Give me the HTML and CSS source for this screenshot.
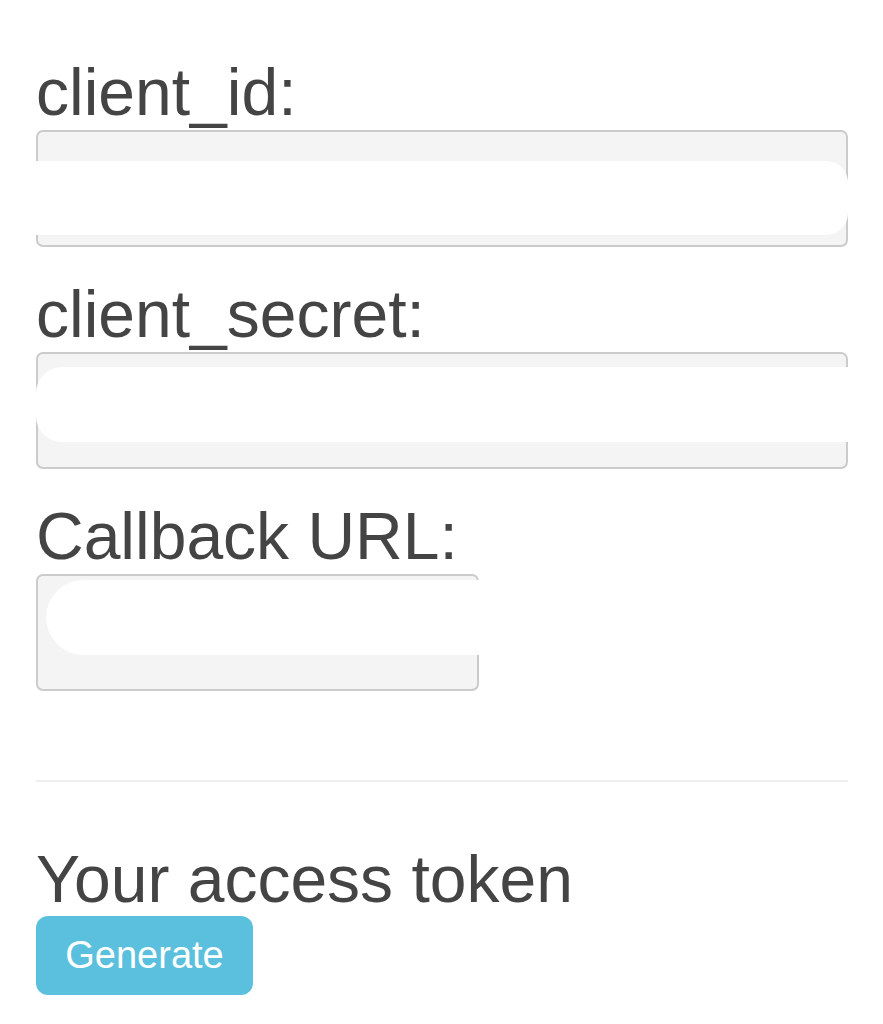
FILE: index.html
```html
<!DOCTYPE html>
<html lang="en">
<head>
<meta charset="utf-8">
<title>Access token</title>
<link rel="stylesheet" href="styles.css">
</head>
<body>
<div class="page">
  <form class="form">
    <label class="label">client_id:</label>
    <div class="field field-id"><div class="fill"></div></div>
    <label class="label">client_secret:</label>
    <div class="field field-secret"><div class="fill"></div></div>
    <label class="label">Callback URL:</label>
    <div class="field field-url"><div class="fill"></div></div>
  </form>
  <hr class="rule">
  <h2 class="heading">Your access token</h2>
  <button class="btn" type="button">Generate</button>
</div>
</body>
</html>
```
FILE: styles.css
```css
html, body {
  margin: 0;
  padding: 0;
  background: #ffffff;
}
.page {
  padding: 55px 35px 0 36px;
  font-family: "Liberation Sans", Arial, Helvetica, sans-serif;
  color: #444444;
}
.form {
  display: flex;
  flex-direction: column;
  margin: 0;
}
.label {
  display: block;
  font-size: 66px;
  line-height: 75px;
  margin: 0;
}
.field {
  box-sizing: border-box;
  height: 117px;
  border: 2px solid #cbcbcb;
  border-radius: 7px;
  background: #f4f4f4;
  margin-bottom: 30px;
}
.field:last-child {
  margin-bottom: 0;
}
.fill {
  background: #ffffff;
  height: 75px;
}
.field-id {
  width: 812px;
  padding-top: 29px;
}
.field-id .fill {
  height: 74px;
  margin: 0 -2px;
  border-radius: 0 22px 22px 0;
}
.field-secret {
  width: 812px;
  padding-top: 13px;
}
.field-secret .fill {
  margin: 0 -2px;
  border-radius: 26px 0 0 26px;
}
.field-url {
  width: 443px;
  padding-top: 4px;
}
.field-url .fill {
  margin: 0 -2px 0 8px;
  border-radius: 38px 0 0 38px;
}
.rule {
  border: 0;
  border-top: 2px solid #eeeeee;
  margin: 89px 0 60px;
  width: 812px;
}
.heading {
  font-size: 66px;
  line-height: 74px;
  font-weight: normal;
  margin: 0;
  color: #444444;
}
.btn {
  display: block;
  width: 217px;
  height: 79px;
  border: 0;
  border-radius: 12px;
  background: #5bc0de;
  color: #ffffff;
  font-family: "Liberation Sans", Arial, Helvetica, sans-serif;
  font-size: 38px;
  padding: 0;
  margin: 0;
}
```
